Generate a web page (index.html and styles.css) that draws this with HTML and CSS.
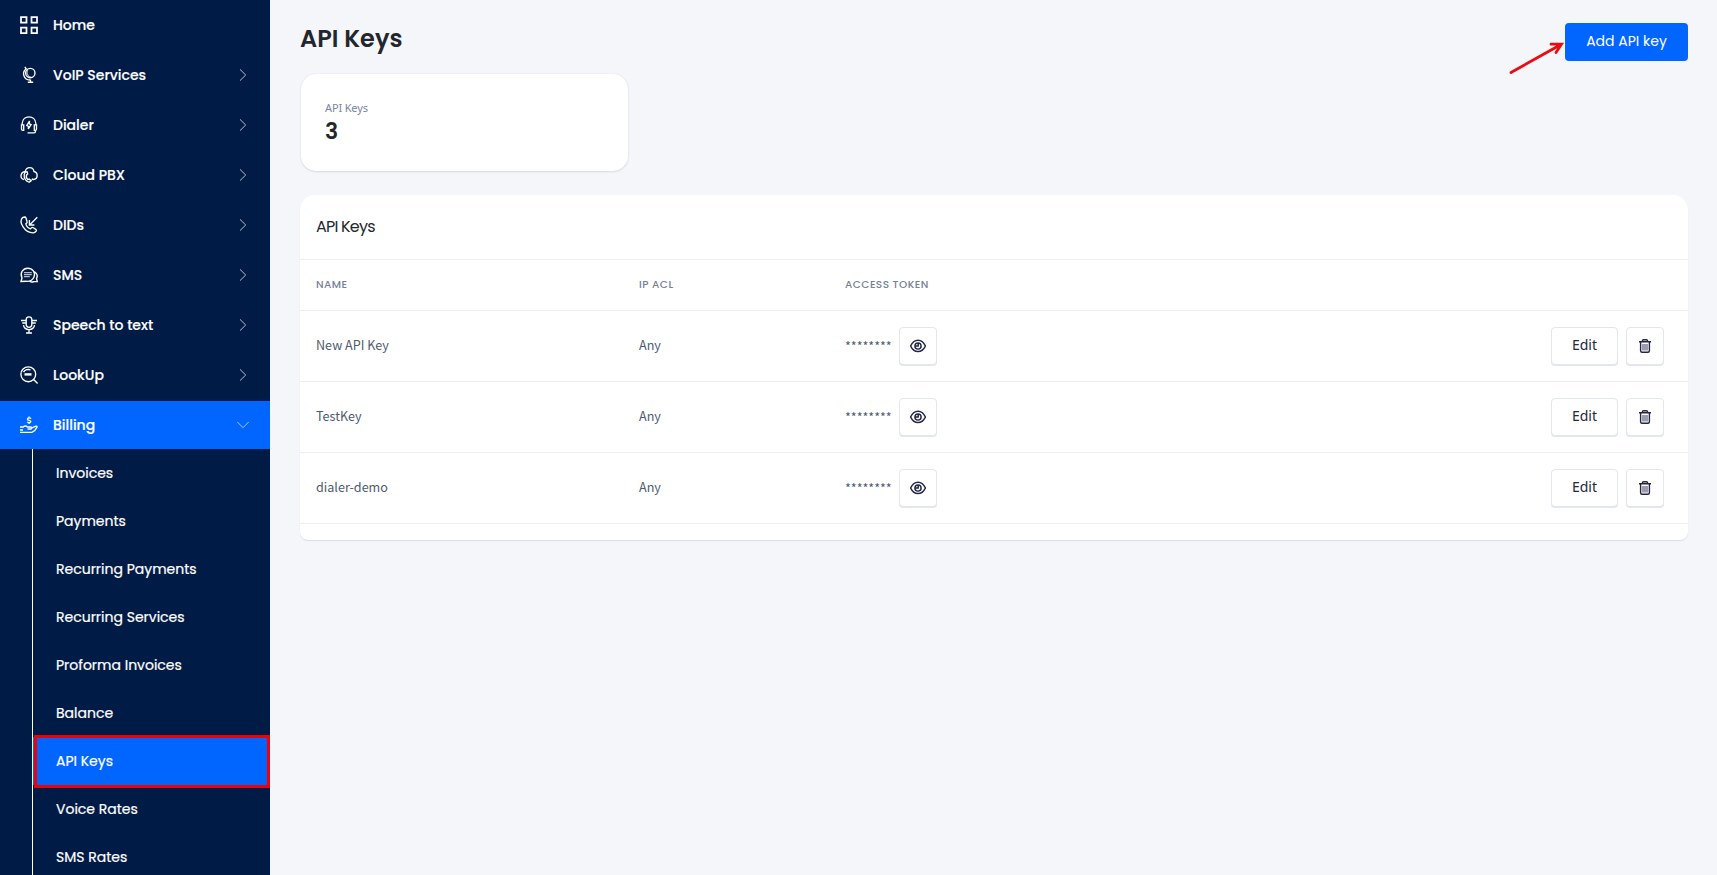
FILE: index.html
```html
<!DOCTYPE html>
<html lang="en">
<head>
<meta charset="utf-8">
<title>API Keys</title>
<link rel="stylesheet" href="styles.css">
</head>
<body>
<svg class="defs" width="0" height="0">
  <symbol id="chev" viewBox="0 0 12 12"><path d="M3 .4 8.700 6 3 11.600"/></symbol>
  <symbol id="eye" viewBox="0 0 16 14"><path d="M.6 7C4.200-.7 11.800-.7 15.400 7 11.800 14.400 4.200 14.400.6 7Z"/><circle cx="8" cy="7" r="3.100"/><path d="M8.200 4v3H5.200"/></symbol>
  <symbol id="trash" viewBox="0 0 12 14"><path d="M0 2.700h12M3.500 2.500V1.700Q3.500.7 4.500.7h3q1 0 1 1v.8M1.600 3v8.800q0 1.500 1.500 1.500h5.800q1.500 0 1.500-1.500V3"/><path class="thin" d="M4 5v6.500M6 5v6.500M8 5v6.500"/></symbol>
</svg>
<div class="app">
  <nav class="sidebar">
    <a class="item"><svg class="icon home" viewBox="0 0 18 18"><path d="M1 1h5.500v5.500H1zM11.500 1H17v5.500h-5.500zM1 11.500h5.500V17H1zM11.500 11.500H17V17h-5.500z"/></svg><span>Home</span></a>
    <a class="item"><svg class="icon" viewBox="0 0 18 18"><circle cx="10.300" cy="7" r="4.700"/><path d="m4.800 1 1.300 1.700C1.500 6.500 3.500 14.300 10.500 14M10.500 13.800v2M7.800 16.200h5.400"/><path class="faint" d="M7.800 3.700C6 6.500 7.300 10.800 11 11.300"/></svg><span>VoIP Services</span><svg class="chev"><use href="#chev"/></svg></a>
    <a class="item"><svg class="icon" viewBox="0 0 18 18"><path d="M2.200 8.500V7.500C2.600-1.400 15.400-1.400 15.800 7.500v1M1.500 8.800h2.200v5.500H2.800Q1.500 14.300 1.500 13ZM16.500 8.800h-2.200v5.500h.9q1.300 0 1.300-1.300ZM15.500 14.500v.8q0 1.500-1.500 1.500H7.500M9.500 5 6.800 9.500l1.700.8L8.300 13l2.800-4.500-1.800-.7Z"/></svg><span>Dialer</span><svg class="chev"><use href="#chev"/></svg></a>
    <a class="item"><svg class="icon" viewBox="0 0 18 18"><path d="M5.200 5.500C6.500.4 13 .4 14 5.500c4.500 1.400 4 7.600-.5 8-.8 0-1.300-.2-1.800-.6M5.500 5.500C-.2 5.800-.2 13 4 13.500M5.200 6.200c-1.800 2.300-1.300 6.500 1.400 8.800l2.600 1.300 2-1.600-2-1.600-1.500.5C6 11.500 6 10 6.700 8.800l1-.8-.6-2.200Z"/></svg><span>Cloud PBX</span><svg class="chev"><use href="#chev"/></svg></a>
    <a class="item"><svg class="icon" viewBox="0 0 18 18"><path d="M4.800 1 2.400 1.700C-1.500 6 4.500 17 13.200 16.900q1.600-.2 2.900-1.700.8-.9-.2-1.800l-3.100-1.900q-.8-.4-1.400.4l-.9.9C8.300 12 6.200 9.500 5.900 7.800l.9-.9q.6-.6.200-1.500L5.900 1.800Q5.600 1 4.800 1ZM17.300 1.300 9.800 8.700M9.400 4v5h5"/></svg><span>DIDs</span><svg class="chev"><use href="#chev"/></svg></a>
    <a class="item"><svg class="icon" viewBox="0 0 18 18"><path d="M1 15.500 2 12C-.5 7 3 2.200 7.700 2.200c5 0 8 4.500 6.300 8.800-1.200 3-4 4.400-7.500 4.300ZM14.500 5.800c2.700 2 3.200 4.800 2 6.800l.8 3h-3.500c-1.300.6-3 .4-4-.2"/><path class="faint" d="M4 6.700h7.800M4 8.700h7.800M4 10.700h5.800"/></svg><span>SMS</span><svg class="chev"><use href="#chev"/></svg></a>
    <a class="item"><svg class="icon" viewBox="0 0 18 18"><rect x="6.200" y=".8" width="5.600" height="10.500" rx="2.800"/><path d="M1 4.500h5M12 4.500h5M2.200 7h4M11.800 7h4M3.500 9.200c.8 5.800 10.200 5.800 11 0M9 13.500V17M6 17h6"/></svg><span>Speech to text</span><svg class="chev"><use href="#chev"/></svg></a>
    <a class="item"><svg class="icon" viewBox="0 0 18 18"><circle cx="8.300" cy="8.300" r="7.400"/><path d="m13.600 13.600 4 4M3.500 6.200C5 3.500 8.500 3 10.500 4"/><path class="bold" d="M4.500 8.400h7"/></svg><span>LookUp</span><svg class="chev"><use href="#chev"/></svg></a>
    <a class="item active"><svg class="icon" viewBox="0 0 18 18"><path d="M11 2.700C10.300 1.500 7.500 1.600 7.500 3.200c0 1.700 3.300.8 3.300 2.400C10.800 7 8 7.200 7.300 5.800M9.100.5v1.200M9.100 6.800v1.200M0 11h3.200c1.500-1.300 3.200-1 4.300 0h3.200q1 .1 1 1t-1 1H7.500M11.500 12.200l4.300-2q1.300-.3 1.300.7-1.600 3.800-5.300 5.400H0M0 14h3"/></svg><span>Billing</span><svg class="chev down"><use href="#chev"/></svg></a>
    <div class="submenu">
      <a class="sub">Invoices</a>
      <a class="sub">Payments</a>
      <a class="sub">Recurring Payments</a>
      <a class="sub">Recurring Services</a>
      <a class="sub">Proforma Invoices</a>
      <a class="sub">Balance</a>
      <a class="sub selected">API Keys</a>
      <a class="sub">Voice Rates</a>
      <a class="sub">SMS Rates</a>
    </div>
  </nav>
  <main class="content">
    <header class="page-head">
      <h1>API Keys</h1>
      <button class="primary">Add API key
        <svg class="arrow" viewBox="0 0 56 34"><path d="M2 31.500 52 3.500M42 3.200 52.500 3.200 47 11.500"/></svg>
      </button>
    </header>
    <section class="stat">
      <div class="stat-label">API Keys</div>
      <div class="stat-value">3</div>
    </section>
    <section class="panel">
      <h2>API Keys</h2>
      <div class="row head"><span>Name</span><span>IP ACL</span><span>Access Token</span></div>
      <div class="row"><span class="cell">New API Key</span><span class="cell">Any</span><span class="token"><span class="stars">********</span><button class="btn sq"><svg class="eye"><use href="#eye"/></svg></button></span><span class="actions"><button class="btn edit">Edit</button><button class="btn sq"><svg class="trash"><use href="#trash"/></svg></button></span></div>
      <div class="row"><span class="cell">TestKey</span><span class="cell">Any</span><span class="token"><span class="stars">********</span><button class="btn sq"><svg class="eye"><use href="#eye"/></svg></button></span><span class="actions"><button class="btn edit">Edit</button><button class="btn sq"><svg class="trash"><use href="#trash"/></svg></button></span></div>
      <div class="row"><span class="cell">dialer-demo</span><span class="cell">Any</span><span class="token"><span class="stars">********</span><button class="btn sq"><svg class="eye"><use href="#eye"/></svg></button></span><span class="actions"><button class="btn edit">Edit</button><button class="btn sq"><svg class="trash"><use href="#trash"/></svg></button></span></div>
    </section>
  </main>
</div>
</body>
</html>
```
FILE: styles.css
```css
* { box-sizing: border-box; }
body { margin: 0; background: #f4f6fa; font-family: Poppins, Inter, sans-serif; color: #24262d; }
svg { fill: none; stroke: currentColor; flex: none; }
.defs { display: block; }
.app { display: flex; height: 875px; overflow: hidden; }
.sidebar { width: 270px; height: 875px; flex: none; background: #001b45; color: #fff; overflow: hidden; padding-top: 1px; }
.item { display: flex; align-items: center; height: 48px; margin-bottom: 2px; padding: 0 21px 0 20px; font-size: 14px; font-weight: 500; line-height: 20px; white-space: nowrap; -webkit-text-stroke: .15px currentColor; }
.item.active { background: #0066ff; margin-bottom: 0; }
.icon { width: 18px; height: 18px; margin-right: 15px; stroke-width: 1.35; overflow: visible; }
.icon.home { stroke-width: 1.75; }
.faint { stroke-width: 1.3; opacity: .7; }
.bold { stroke-width: 2.4; }
.chev { width: 12px; height: 12px; margin-left: auto; stroke-width: 1; color: #b4bfd2; }
.chev.down { transform: rotate(90deg); color: #a9cbff; }
.submenu { margin-left: 32px; border-left: 1px solid #fff; }
.sub { display: flex; align-items: center; height: 48px; padding-left: 23px; font-size: 14px; font-weight: 400; white-space: nowrap; -webkit-text-stroke: .2px currentColor; }
.selected { background: #0066ff; position: relative; }
.selected::after { content: ""; position: absolute; left: 1px; right: 0; top: -2px; bottom: -3px; border: 3px solid #eb0209; }
.content { flex: 1; padding: 23px 29px 0 30px; }
.page-head { display: flex; justify-content: space-between; height: 51px; }
h1 { margin: 0; font-size: 24px; line-height: 32px; font-weight: 600; }
button { font: inherit; }
.primary { position: relative; width: 123px; height: 38px; border: 0; border-radius: 4px; background: #0066ff; color: #fff; font-size: 14px; padding: 0 0 1px; white-space: nowrap; }
.arrow { position: absolute; left: -56px; top: 18px; width: 56px; height: 34px; stroke: #e80d12; stroke-width: 2.8; stroke-linecap: round; }
.stat { width: 327px; height: 97px; margin-left: 1px; background: #fff; border-radius: 15px; box-shadow: 0 0 1px #cfd8e5, 0 1px 2px #d5dae4; padding: 25px 24px 0; }
.stat-label { font-family: "Noto Sans", sans-serif; font-size: 11px; line-height: 17px; padding-bottom: 2px; letter-spacing: -.15px; color: #7786a3; }
.stat-value { font-size: 22px; line-height: 28px; font-weight: 600; }
.panel { margin-top: 24px; height: 345px; background: #fff; border-radius: 15px 15px 8px 8px; box-shadow: 0 1px 1px #d9dce7; }
h2 { margin: 0; height: 65px; padding: 20px 16px 0; border-bottom: 1px solid #ebeff5; font-size: 16px; line-height: 24px; font-weight: 400; letter-spacing: -.8px; }
.row { display: grid; grid-template-columns: 323px 206px 1fr auto; align-items: center; height: 71px; padding: 0 24px 0 16px; border-bottom: 1px solid #ebeff5; font-family: "Noto Sans CJK SC", sans-serif; font-size: 12.6px; color: #4e5b6e; }
.row.head { height: 51px; font-family: Poppins, Inter, sans-serif; font-size: 10.5px; font-weight: 500; letter-spacing: .45px; text-transform: uppercase; color: #74819a; padding-bottom: 1px; }
.cell { white-space: nowrap; padding-bottom: 3px; }
.token, .actions { display: flex; align-items: center; gap: 8px; }
.stars { width: 46px; letter-spacing: -.05px; padding-bottom: 2px; }
.btn { height: 38px; border: 1px solid #e1e6ef; border-radius: 4px; box-shadow: 0 1px 0 #e1e6ef; background: #fff; color: #222744; padding: 0; display: flex; align-items: center; justify-content: center; }
.sq { width: 38px; }
.edit { width: 67px; font: 14px/20px "Noto Sans", sans-serif; padding-bottom: 3px; }
.eye { width: 16px; height: 14px; stroke-width: 1.45; }
.trash { width: 12px; height: 14px; stroke-width: 1.4; }
.thin { stroke-width: .9; }
```
